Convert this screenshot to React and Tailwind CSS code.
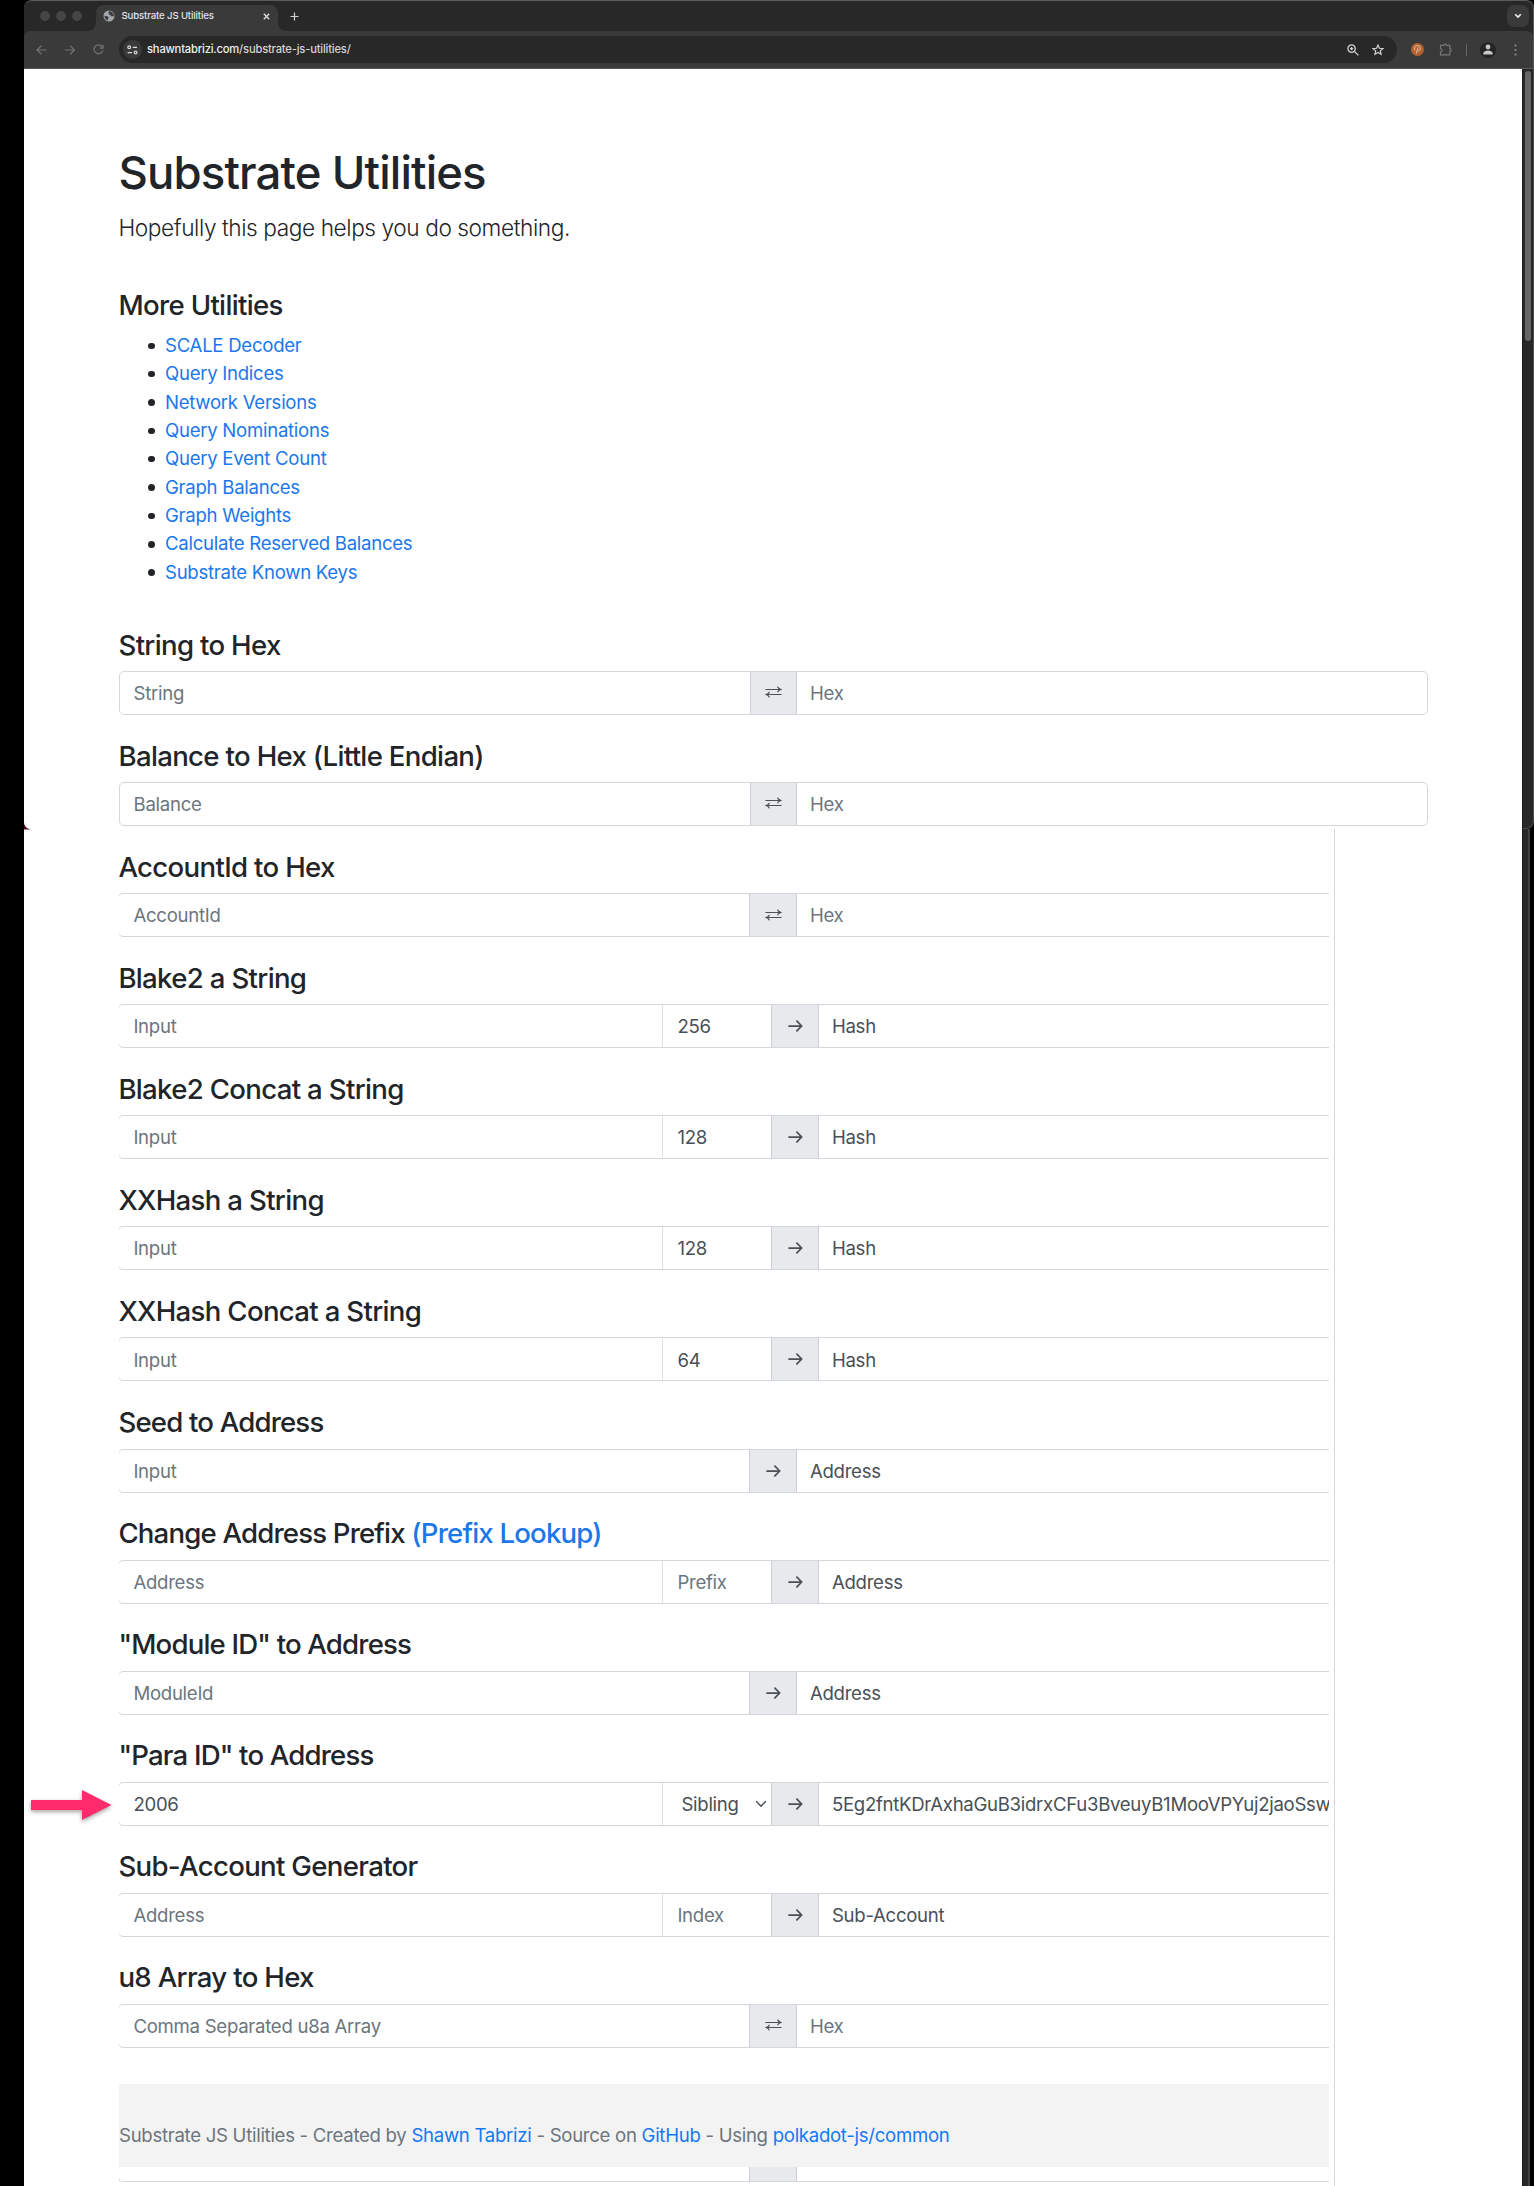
import React from "react";

const links = [
  "SCALE Decoder",
  "Query Indices",
  "Network Versions",
  "Query Nominations",
  "Query Event Count",
  "Graph Balances",
  "Graph Weights",
  "Calculate Reserved Balances",
  "Substrate Known Keys",
];

const tools = [
  { title: "AccountId to Hex", input: "AccountId", swap: true, out: "Hex" },
  { title: "Blake2 a String", input: "Input", mid: "256", out: "Hash" },
  { title: "Blake2 Concat a String", input: "Input", mid: "128", out: "Hash" },
  { title: "XXHash a String", input: "Input", mid: "128", out: "Hash" },
  { title: "XXHash Concat a String", input: "Input", mid: "64", out: "Hash" },
  { title: "Seed to Address", tight: true, input: "Input", out: "Address" },
  { title: "Change Address Prefix", tight: true, link: "(Prefix Lookup)", input: "Address", mid: "Prefix", midMuted: true, out: "Address" },
  { title: '"Module ID" to Address', tight: true, input: "ModuleId", out: "Address" },
  { title: '"Para ID" to Address', tight: true, input: "2006", filled: true, select: "Sibling", out: "5Eg2fntKDrAxhaGuB3idrxCFu3BveuyB1MooVPYuj2jaoSsw" },
  { title: "Sub-Account Generator", input: "Address", mid: "Index", midMuted: true, out: "Sub-Account" },
  { title: "u8 Array to Hex", input: "Comma Separated u8a Array", swap: true, out: "Hex" },
];

function SwapIcon() {
  return (
    <svg className="-mt-px" width="17" height="12" viewBox="0 0 17 12" fill="none" stroke="#495057" strokeWidth="1" strokeLinecap="round" strokeLinejoin="round">
      <path d="M.8 3.500H15.800M1.200 8.500H16.200" />
      <path d="M12.800 1c.4 1.400 1.400 2.200 3.400 2.500-2 .3-3 1-3.400 2.300M4.200 6.200C3.800 7.500 2.800 8.200.8 8.500c2 .3 3 1.100 3.400 2.500" strokeWidth="1.200" />
    </svg>
  );
}

function ArrowIcon() {
  return (
    <svg width="15" height="12" viewBox="0 0 15 12" fill="none" stroke="#495057" strokeWidth="1.75" strokeLinecap="round" strokeLinejoin="round">
      <path d="M1 6H13.600M8.900 1.100 13.700 6 8.900 10.900" />
    </svg>
  );
}

function Heading({ tight, children }) {
  return (
    <h3 className={`h-[34px] text-[27.6px] leading-[34px] font-medium whitespace-nowrap text-[#212529] ${tight ? "tracking-[-0.820px]" : "tracking-[-0.680px]"}`}>
      {children}
    </h3>
  );
}

function ToolRow({ tool }) {
  const wide = tool.mid || tool.select;
  return (
    <section className="h-[111.05px] shrink-0 pt-[21px]">
      <Heading tight={tool.tight}>
        {tool.title}
        {tool.link && <a className="text-[#1b78ea]"> {tool.link}</a>}
      </Heading>
      <div className="mt-[9.300px] flex h-[44px] w-[1309px] overflow-hidden rounded-[5px] border border-[#d3d6db] whitespace-nowrap">
        <div className={`flex shrink-0 items-center pt-[2px] pl-[14px] ${wide ? "w-[543px]" : "w-[630px]"} ${tool.filled ? "text-[#495057]" : "text-[#6c757d]"}`}>
          {tool.input}
        </div>
        {tool.mid && (
          <div className={`flex w-[109px] shrink-0 items-center border-l border-[#dee0e4] pt-[2px] pl-[14px] ${tool.midMuted ? "text-[#6c757d]" : "text-[#495057]"}`}>
            {tool.mid}
          </div>
        )}
        {tool.select && (
          <div className="flex w-[109px] shrink-0 items-center border-l border-[#dee0e4] pt-[2px] pl-[18px] text-[#495057]">
            <span className="w-[57px]">{tool.select}</span>
            <svg className="ml-[16.500px] -mt-[2px]" width="12" height="8" viewBox="0 0 12 8" fill="none" stroke="#495057" strokeWidth="1.400" strokeLinecap="round" strokeLinejoin="round">
              <path d="M1.500 1.500 6 6.200l4.500-4.700" />
            </svg>
          </div>
        )}
        <div className="flex w-[47.500px] shrink-0 items-center justify-center border-x border-[#cdd1d7] bg-[#e8e9ed]">
          {tool.swap ? <SwapIcon /> : <ArrowIcon />}
        </div>
        <div className={`flex items-center pt-[2px] pl-[13px] ${tool.swap ? "text-[#6c757d]" : "text-[#495057]"} ${tool.select ? "tracking-[-0.300px]" : ""}`}>{tool.out}</div>
      </div>
    </section>
  );
}

function BrowserBar() {
  return (
    <header className="h-[69px] shrink-0 overflow-hidden rounded-t-[8px] border-t border-r border-[#5a5a5a] bg-[#282828]">
      <div className="flex h-[30px] items-end pl-[16px]">
        <div className="flex items-center gap-[6px] self-center">
          <i className="size-[10px] rounded-full bg-[#464646]" />
          <i className="size-[10px] rounded-full bg-[#464646]" />
          <i className="size-[10px] rounded-full bg-[#464646]" />
        </div>
        <svg className="ml-[6px] shrink-0" width="8" height="8" viewBox="0 0 8 8"><path d="M8 0v8H0a8 8 0 0 0 8-8Z" fill="#3a3a3a" /></svg>
        <div className="flex h-[26px] w-[182px] items-center rounded-t-[8px] bg-[#3a3a3a] pb-[4px] pl-[7px]">
          <svg width="12" height="12" viewBox="0 0 12 12">
            <circle cx="6" cy="6" r="5.500" fill="#a4a8ad" />
            <path d="M1.700 5.700 4.500 6.200 6 7.700 5 8.500v2A4.700 4.700 0 0 1 1.500 6ZM6.200 1.300 5 2.500l1.300.6-.6 1.300 1.700.7 1.100 1.300 2-.3.300 1A4.900 4.900 0 0 0 7.800 1.500Z" fill="#3c3d40" />
          </svg>
          <span className="ml-[6.500px] w-[94px] text-[9.600px] leading-none font-medium tracking-[-0.130px] whitespace-nowrap text-[#e4e4e4]">Substrate JS Utilities</span>
          <svg className="ml-[47.500px]" width="7" height="7" viewBox="0 0 7 7" stroke="#e0e0e0" strokeWidth="1.300"><path d="m.8.8 5.400 5.400M6.200.8.8 6.200" /></svg>
        </div>
        <svg className="shrink-0" width="8" height="8" viewBox="0 0 8 8"><path d="M0 0v8h8a8 8 0 0 1-8-8Z" fill="#3a3a3a" /></svg>
        <svg className="ml-[4px] self-center" width="9" height="9" viewBox="0 0 9 9" stroke="#d0d0d0" strokeWidth="1.200"><path d="M4.500.5v8M.5 4.500h8" /></svg>
        <div className="mr-[4px] ml-auto flex size-[22px] items-center justify-center self-center rounded-[7px] bg-[#3a3a3a]">
          <svg width="8" height="6" viewBox="0 0 8 6" fill="none" stroke="#f0f0f0" strokeWidth="1.600"><path d="m1.200 1.200 2.800 2.800 2.800-2.800" /></svg>
        </div>
      </div>
      <div className="flex h-[38px] items-center rounded-t-[6px] border-b border-[#5a5a5a] bg-[#3a3a3a] pl-[12px]">
        <svg width="11" height="10" viewBox="0 0 11 10" fill="none" stroke="#747474" strokeWidth="1.200"><path d="M10.500 5H1M5.400.6 1 5l4.400 4.400" /></svg>
        <svg className="ml-[18px]" width="11" height="10" viewBox="0 0 11 10" fill="none" stroke="#747474" strokeWidth="1.200"><path d="M0 5h9.500M5.100.6 9.500 5 5.100 9.400" /></svg>
        <svg className="ml-[17px]" width="11" height="11" viewBox="0 0 11 11" fill="none" stroke="#747474" strokeWidth="1.200"><path d="M9.700 6.300A4.400 4.400 0 1 1 8.900 2.600L10 3.900M10 .8v3.300H6.700" /></svg>
        <div className="ml-[14.500px] flex h-[27px] w-[1278px] items-center rounded-full bg-[#282828] pl-[4px]">
          <div className="flex size-[19px] items-center justify-center rounded-full bg-[#3a3a3a]">
            <svg width="11" height="10" viewBox="0 0 11 10" fill="none" stroke="#d8d8d8" strokeWidth="1.200">
              <circle cx="2.200" cy="2.300" r="1.400" /><path d="M5.800 2.300H10M.6 7.600H5" /><circle cx="8.600" cy="7.600" r="1.400" />
            </svg>
          </div>
          <span className="mt-px ml-[5.500px] text-[11.200px] leading-none font-medium tracking-[-0.190px] whitespace-nowrap text-[#f0f0f0]">
            shawntabrizi.com<span className="text-[#d4d4d4]">/substrate-js-utilities/</span>
          </span>
          <div className="mr-[13px] ml-auto flex items-center gap-[13px]">
            <svg width="12" height="12" viewBox="0 0 12 12" fill="none" stroke="#d0d0d0" strokeWidth="1.300"><circle cx="4.600" cy="4.600" r="3.700" /><path d="m7.400 7.400 4 4M4.600 3v3.200M3 4.600h3.200" /></svg>
            <svg width="12" height="12" viewBox="0 0 12 12" fill="none" stroke="#d0d0d0" strokeWidth="1.200"><path d="m6 1.100 1.400 3.200 3.500.3-2.600 2.300.8 3.400L6 8.500l-3.100 1.800.8-3.400L1.100 4.600l3.500-.3Z" /></svg>
          </div>
        </div>
        <svg className="ml-[14px]" width="13" height="13" viewBox="0 0 13 13" fill="none">
          <circle cx="6.500" cy="6.500" r="6.500" fill="#b3622f" />
          <path d="M4 7.100A2.900 2.900 0 1 1 6.700 8.300M6.900 4.500 5.400 10.600" stroke="#dfb296" strokeWidth="1.100" />
        </svg>
        <svg className="ml-[15px]" width="14" height="13" viewBox="0 0 14 13" fill="none" stroke="#777" strokeWidth="1.200"><path d="M1.500 2.300h3.400a1.300 1.300 0 0 1 2.600 0h3.300v3.300a1.300 1.300 0 0 1 0 2.700v3.600H1.500V9a1.800 1.800 0 0 0 0-3.500Z" /></svg>
        <i className="ml-[13px] h-[12px] w-px bg-[#666]" />
        <div className="ml-[13px] flex size-[16px] items-center justify-center rounded-full bg-[#252525]">
          <svg width="10" height="11" viewBox="0 0 10 11" fill="#c8c8c8"><circle cx="5" cy="3" r="2.400" /><path d="M.4 10.500V9.200C.4 7.500 3 6.600 5 6.600s4.600.9 4.600 2.600v1.300Z" /></svg>
        </div>
        <svg className="ml-[18px]" width="3" height="12" viewBox="0 0 3 12" fill="#8a8a8a"><circle cx="1.500" cy="1.500" r="1.100" /><circle cx="1.500" cy="6" r="1.100" /><circle cx="1.500" cy="10.500" r="1.100" /></svg>
      </div>
    </header>
  );
}

export default function App() {
  return (
    <div className="relative flex h-[2186px] w-[1534px] overflow-hidden bg-black pl-[24px] font-['Inter','Liberation_Sans',sans-serif] text-[18.600px] tracking-[-0.280px]">
      <div className="flex w-[1510px] flex-col">
        <BrowserBar />
        <div className="flex h-[760px] shrink-0">
          <main className="flex w-[1498px] flex-col bg-white pt-[75.500px] pl-[94.500px]">
            <h1 className="h-[56px] text-[45.500px] leading-[56px] font-medium tracking-[-0.870px] text-[#212529]">Substrate Utilities</h1>
            <p className="mt-[9.800px] h-[35px] text-[22.700px] leading-[36px] font-light tracking-[-0.440px] text-[#212529]">Hopefully this page helps you do something.</p>
            <div className="mt-[42.400px]"><Heading>More Utilities</Heading></div>
            <ul className="mt-[10px] mb-[19.800px] pl-[29.500px]">
              {links.map((name) => (
                <li key={name} className="flex h-[28.350px] items-center">
                  <i className="size-[6.500px] rounded-full bg-[#212529]" />
                  <a className="ml-[10.500px] text-[#1b78ea]">{name}</a>
                </li>
              ))}
            </ul>
            <ToolRow tool={{ title: "String to Hex", input: "String", swap: true, out: "Hex" }} />
            <ToolRow tool={{ title: "Balance to Hex (Little Endian)", input: "Balance", swap: true, out: "Hex" }} />
          </main>
          <aside className="w-[12px] rounded-br-[8px] border-r border-b border-l border-[#4c4c4c] border-l-[#1c1c1c] bg-[#282828] pt-[2px] pl-[2px]">
            <div className="h-[270px] w-[6px] rounded-full bg-[#666]" />
          </aside>
        </div>
        <div className="flex h-[1357px] shrink-0">
          <div className="w-[1498px] bg-white pl-[95px]">
            <div className="flex h-[1357px] w-[1216px] border-r border-[#d6d7dc]">
              <div className="flex w-[1210px] flex-col overflow-hidden">
                <div className="-ml-[0.600px] flex flex-col">
                  {tools.map((tool) => (
                    <ToolRow key={tool.title} tool={tool} />
                  ))}
                </div>
                <footer className="mt-[33.500px] h-[83px] shrink-0 bg-[#f3f3f3] pt-[37px] text-[18.600px] leading-[28px] tracking-[-0.290px] whitespace-nowrap text-[#6c757d]">
                  Substrate JS Utilities - Created by <a className="text-[#147af3]">Shawn Tabrizi</a> - Source on <a className="text-[#147af3]">GitHub</a> - Using <a className="text-[#147af3]">polkadot-js/common</a>
                </footer>
                <div className="-ml-px flex h-[14.500px] w-[1310px] shrink-0 rounded-b-[5px] border-b border-l border-[#d3d6db]">
                  <div className="ml-[630px] w-[47.500px] border-x border-[#cdd1d7] bg-[#e8e9ed]" />
                </div>
              </div>
            </div>
          </div>
          <div className="w-[8px] border-r-2 border-l border-r-[#424242] border-l-[#1c1c1c] bg-[#292929]" />
        </div>
      </div>
      <svg className="absolute top-[823px] left-[24px]" width="8" height="7" viewBox="0 0 8 7"><path d="M0 0C.8 3.800 3 6 7.500 6.500H0Z" fill="#4a0c18" /></svg>
      <svg className="absolute top-[1784px] left-[26px] drop-shadow-[0_2px_2px_rgba(0,0,0,0.35)]" width="90" height="42" viewBox="0 0 90 42"><path d="M5 16h51V6l29.500 15L56 36V26H5Z" fill="#ff2b6d" /></svg>
    </div>
  );
}
